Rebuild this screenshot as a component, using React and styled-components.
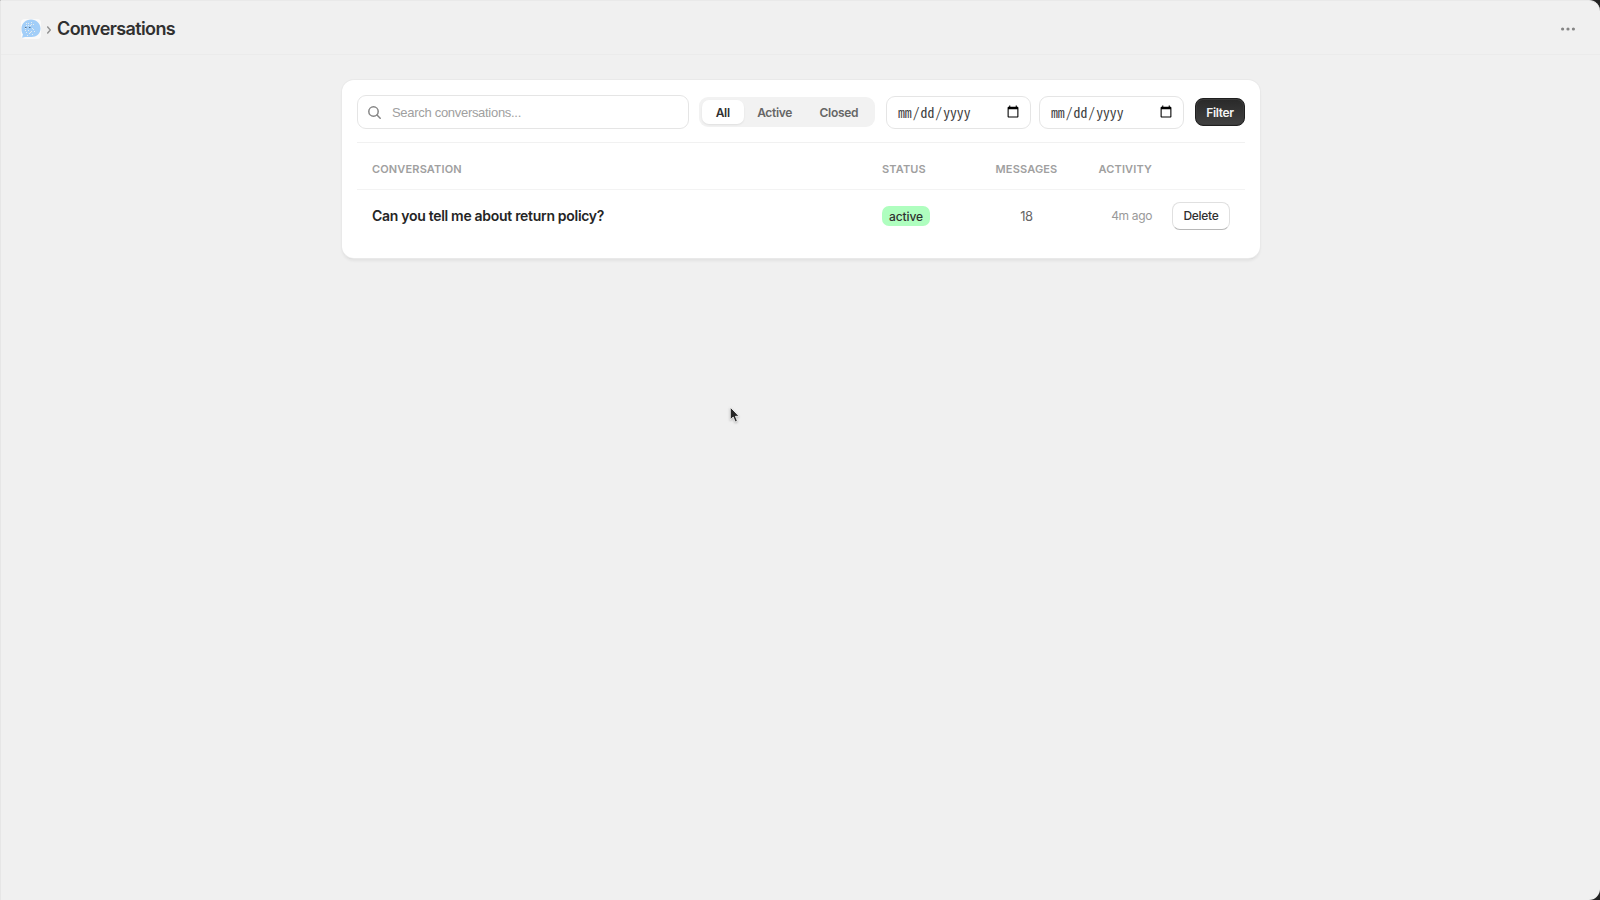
import React from "react";
import styled, { createGlobalStyle } from "styled-components";

const GlobalStyle = createGlobalStyle`
  * {
    box-sizing: border-box;
  }

  body {
    margin: 0;
    background: #222222;
    font-family: Inter, "Liberation Sans", sans-serif;
    color: #303030;
  }

  button, input {
    font-family: inherit;
  }
`;

const Page = styled.div`
  height: 900px;
  overflow: hidden;
  background: #f0f0f0;
  border-top: 1px solid #e9e9e9;
  border-left: 1px solid #e6e6e6;
  border-radius: 0 11px 11px 0;
`;

const TopBar = styled.header`
  height: 54px;
  padding: 2px 25px 0 20px;
  display: flex;
  align-items: center;
  border-bottom: 1px solid #ebebeb;
`;

const Chevron = styled.svg`
  margin: 2px 5px 0 5px;
`;

const PageTitle = styled.h1`
  flex: 1;
  margin: 0;
  font-size: 18px;
  line-height: 24px;
  font-weight: 600;
  letter-spacing: -0.62px;
  color: #303030;
`;

const MoreButton = styled.button`
  display: flex;
  padding: 0;
  border: 0;
  background: none;
`;

const Card = styled.main`
  width: 918px;
  height: 178px;
  margin: 25px 0 0 341px;
  padding: 15px 15px 0;
  background: #ffffff;
  border-radius: 12px;
  box-shadow: 0 0 0 1px #e9e9e9, 0 1px 0 0 #cacaca, 0 3px 3px rgba(0, 0, 0, 0.06);
`;

const Toolbar = styled.div`
  height: 48px;
  padding-bottom: 13px;
  display: flex;
  align-items: center;
  border-bottom: 1px solid #f1f1f1;
`;

const SearchBox = styled.label`
  width: 332px;
  height: 34px;
  padding: 0 10px;
  display: flex;
  align-items: center;
  gap: 11px;
  border: 1px solid #e5e5e5;
  border-radius: 9px;
`;

const SearchInput = styled.input`
  flex: 1;
  min-width: 0;
  padding: 0;
  border: 0;
  outline: 0;
  font-family: "Liberation Sans", Arial, sans-serif;
  font-size: 13px;
  letter-spacing: -0.3px;
  color: #303030;

  &::placeholder {
    color: #a0a0a0;
  }
`;

const Tabs = styled.div`
  height: 30px;
  width: 176px;
  margin: 0 11px 0 10px;
  padding: 3px;
  display: flex;
  background: #f2f2f2;
  border-radius: 9px;
`;

const Tab = styled.button`
  width: ${props => props.$width}px;
  padding: 0;
  border: 0;
  border-radius: 7px;
  font-size: 12px;
  font-weight: 600;
  letter-spacing: -0.3px;
  color: ${props => (props.$active ? "#303030" : "#666666")};
  background: ${props => (props.$active ? "#ffffff" : "transparent")};
  box-shadow: ${props => (props.$active ? "0 1px 2px rgba(0, 0, 0, 0.08)" : "none")};
`;

const DateInput = styled.input`
  width: 145px;
  height: 33px;
  margin: 0 ${props => props.$gap}px 0 0;
  padding: 0 8px 1px 10px;
  border: 1px solid #e5e5e5;
  border-radius: 9px;
  background: #ffffff;
  font-family: "Noto Sans Mono CJK SC", monospace;
  font-size: 13.7px;
  color: #404040;
`;

const FilterButton = styled.button`
  width: 50px;
  height: 28px;
  padding: 0;
  border: 1px solid #1f1f1f;
  border-radius: 8px;
  background: linear-gradient(#292929, #414141);
  box-shadow: inset 0 0 0 1px #3b3b3b;
  font-size: 12px;
  font-weight: 600;
  letter-spacing: -0.3px;
  color: #f5f5f5;
`;

const TableRow = styled.div`
  height: ${props => props.$height}px;
  padding: 0 15px;
  display: grid;
  grid-template-columns: 510px 111px 67px 92px 1fr;
  align-items: center;
`;

const HeadRow = styled(TableRow)`
  border-bottom: 1px solid #f3f3f3;
  padding-top: 5px;
  font-size: 11px;
  font-weight: 600;
  letter-spacing: 0.15px;
  color: #a0a0a0;
`;

const Cell = styled.div`
  text-align: ${props => props.$align || "left"};
`;

const Subject = styled(Cell)`
  padding-bottom: 2px;
  font-size: 14px;
  font-weight: 600;
  letter-spacing: -0.3px;
  color: #252525;
`;

const Badge = styled.span`
  width: 48px;
  height: 20px;
  display: flex;
  align-items: center;
  justify-content: center;
  border-radius: 7px;
  background: #affebf;
  font-size: 12px;
  font-weight: 500;
  letter-spacing: -0.1px;
  color: #303030;
`;

const Count = styled(Cell)`
  font-size: 13px;
  letter-spacing: -0.3px;
  color: #666666;
`;

const Time = styled(Cell)`
  padding-bottom: 1px;
  font-size: 12px;
  letter-spacing: -0.35px;
  color: #999999;
`;

const DeleteButton = styled.button`
  justify-self: end;
  width: 58px;
  height: 28px;
  padding: 0 0 1px;
  border: 1px solid #e0e0e0;
  border-bottom-color: #b8b8b8;
  border-radius: 8px;
  background: #ffffff;
  font-size: 12px;
  font-weight: 500;
  letter-spacing: -0.3px;
  color: #303030;
`;

const Pointer = styled.svg`
  position: absolute;
  left: 727px;
  top: 405px;
  filter: drop-shadow(0 1px 1px rgba(0, 0, 0, 0.25));
`;

const TABS = [
  { label: "All", width: 42 },
  { label: "Active", width: 63 },
  { label: "Closed", width: 67 }
];

// freckles on the speech bubble logo
const DOTS = [
  [7, 4], [10, 3], [5, 6], [9, 6], [12, 5], [4, 9], [11, 9], [7, 11],
  [10, 12], [5, 13], [8, 14], [11, 15], [6, 16], [13, 12], [5, 4],
  [8, 8], [12, 10], [9, 13], [7, 6], [4, 11], [10, 5]
];

const Logo = () => (
  <svg width="20" height="20" viewBox="0 0 20 20">
    <rect width="20" height="20" rx="4" fill="#fafafa" />
    <path d="M10 .5C15.5.5 19.5 4.5 19.5 9.5S15.5 18 10.5 18C7.8 18 5.8 18.2 4 18L1 18.8 2 15.5C.9 14 .5 12 .5 9.7.5 4.5 4.5.5 10 .5Z" fill="#a2cef8" />
    {DOTS.map(([x, y]) => (
      <rect key={`${x}-${y}`} x={x} y={y} width="1" height="1" fill="#e6edf0" />
    ))}
    <path d="M4 8h1.5v1H4zM8 8h1.5v1H8z" fill="#56718c" />
  </svg>
);

class App extends React.Component {
  state = { tab: "All", search: "" };

  render() {
    const { tab, search } = this.state;
    return (
      <Page>
        <GlobalStyle />
        <TopBar>
          <Logo />
          <Chevron width="6" height="10" viewBox="0 0 6 10" fill="none" stroke="#929292" strokeWidth="1.4">
            <path d="M1.3 1.5 4.3 5 1.3 8.5" />
          </Chevron>
          <PageTitle>Conversations</PageTitle>
          <MoreButton aria-label="More actions">
            <svg width="14" height="4" viewBox="0 0 14 4" fill="#858585">
              <circle cx="1.6" cy="2" r="1.6" />
              <circle cx="7" cy="2" r="1.6" />
              <circle cx="12.4" cy="2" r="1.6" />
            </svg>
          </MoreButton>
        </TopBar>
        <Card>
          <Toolbar>
            <SearchBox>
              <svg width="13" height="13" viewBox="0 0 13 13" fill="none" stroke="#858585" strokeWidth="1.5" strokeLinecap="round">
                <circle cx="5.5" cy="5.5" r="4.7" />
                <path d="m9 9 3.2 3.2" />
              </svg>
              <SearchInput
                placeholder="Search conversations..."
                value={search}
                onChange={e => this.setState({ search: e.target.value })}
              />
            </SearchBox>
            <Tabs>
              {TABS.map(({ label, width }) => (
                <Tab key={label} $width={width} $active={tab === label} onClick={() => this.setState({ tab: label })}>
                  {label}
                </Tab>
              ))}
            </Tabs>
            <DateInput type="date" $gap={8} />
            <DateInput type="date" $gap={11} />
            <FilterButton>Filter</FilterButton>
          </Toolbar>
          <HeadRow $height={47}>
            <Cell>CONVERSATION</Cell>
            <Cell>STATUS</Cell>
            <Cell $align="center">MESSAGES</Cell>
            <Cell $align="right">ACTIVITY</Cell>
          </HeadRow>
          <TableRow $height={52}>
            <Subject>Can you tell me about return policy?</Subject>
            <Badge>active</Badge>
            <Count $align="center">18</Count>
            <Time $align="right">4m ago</Time>
            <DeleteButton>Delete</DeleteButton>
          </TableRow>
        </Card>
        <Pointer width="12" height="20" viewBox="0 0 12 20">
          <path d="M3.3 2.2v12.5l2.9-2.7 2 4.9 2.2-.9-2-4.7h3.7Z" fill="#252525" stroke="#ffffff" strokeWidth=".8" />
        </Pointer>
      </Page>
    );
  }
}

export default App;
